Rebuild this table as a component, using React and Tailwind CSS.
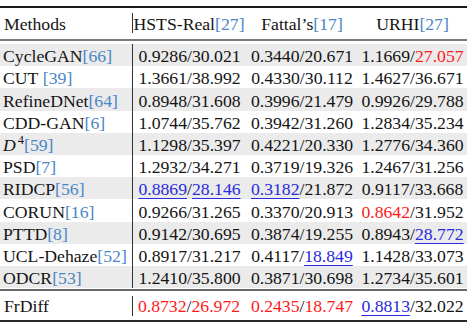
import React from 'react';

// each value: [left, right, styleLeft, styleRight]  ('r' = red, 'u' = blue underlined)
const rows = [
  { name: 'CycleGAN', ref: '66', vals: [['0.9286', '30.021'], ['0.3440', '20.671'], ['1.1669', '27.057', '', 'r']] },
  { name: 'CUT\u00a0', ref: '39', vals: [['1.3661', '38.992'], ['0.4330', '30.112'], ['1.4627', '36.671']] },
  { name: 'RefineDNet', ref: '64', vals: [['0.8948', '31.608'], ['0.3996', '21.479'], ['0.9926', '29.788']] },
  { name: 'CDD-GAN', ref: '6', vals: [['1.0744', '35.762'], ['0.3942', '31.260'], ['1.2834', '35.234']] },
  { name: 'D4', ref: '59', vals: [['1.1298', '35.397'], ['0.4221', '20.330'], ['1.2776', '34.360']] },
  { name: 'PSD', ref: '7', vals: [['1.2932', '34.271'], ['0.3719', '19.326'], ['1.2467', '31.256']] },
  { name: 'RIDCP', ref: '56', vals: [['0.8869', '28.146', 'u', 'u'], ['0.3182', '21.872', 'u'], ['0.9117', '33.668']] },
  { name: 'CORUN', ref: '16', vals: [['0.9266', '31.265'], ['0.3370', '20.913'], ['0.8642', '31.952', 'r']] },
  { name: 'PTTD', ref: '8', vals: [['0.9142', '30.695'], ['0.3874', '19.255'], ['0.8943', '28.772', '', 'u']] },
  { name: 'UCL-Dehaze', ref: '52', vals: [['0.8917', '31.217'], ['0.4117', '18.849', '', 'u'], ['1.1428', '33.073']] },
  { name: 'ODCR', ref: '53', vals: [['1.2410', '35.800'], ['0.3871', '30.698'], ['1.2734', '35.601']] },
];

const ours = [['0.8732', '26.972', 'r', 'r'], ['0.2435', '18.747', 'r', 'r'], ['0.8813', '32.022', 'u']];

const Part = ({ text, kind }) => {
  if (kind === 'r') return <span className="text-[#ff1a1a]">{text}</span>;
  if (kind === 'u') return <span className="text-[#2a2ae0] underline decoration-1 underline-offset-[3px]">{text}</span>;
  return <span>{text}</span>;
};

const Value = ({ v }) => (
  <span>
    <Part text={v[0]} kind={v[2]} />/<Part text={v[1]} kind={v[3]} />
  </span>
);

const Ref = ({ n }) => <span className="text-[#4a86c4]">[{n}]</span>;

const MethodName = ({ name }) => {
  if (name === 'D4') {
    return (
      <span>
        <i>D</i>
        <span className="text-[12.5px] relative -top-[7px] ml-[2px]">4</span>
      </span>
    );
  }
  return <span>{name}</span>;
};

export default function App() {
  return (
    <div
      className="w-[475px] h-[329px] bg-white text-[#141414] pt-[6px]"
      style={{ fontFamily: '"Liberation Serif", "Times New Roman", serif' }}
    >
      <div className="w-[467px] text-[17.7px] leading-none whitespace-nowrap">
        {/* top rule */}
        <div className="h-[2px] bg-[#1a1a1a]" />

        {/* header */}
        <div className="grid grid-cols-[132px_114px_112px_109px] h-[31px] items-center pt-[3px]">
          <div className="pl-[4px]">Methods</div>
          <div className="flex items-center">
            <div className="w-px h-[20px] bg-[#333] -mt-[3px]" />
            <div className="flex-1 text-center -ml-px">
              HSTS-Real<Ref n="27" />
            </div>
          </div>
          <div className="text-center">
            Fattal’s<Ref n="17" />
          </div>
          <div className="text-center">
            URHI<Ref n="27" />
          </div>
        </div>
        <div className="h-[2px] bg-[#7a7a7a]" />

        {/* body */}
        <div className="pt-[3px]">
          {rows.map((r, i) => (
            <div
              key={r.name}
              className={`grid grid-cols-[132px_114px_112px_109px] h-[22.2px] items-stretch ${i % 2 === 0 ? 'bg-[#ebebeb]' : 'bg-white'}`}
            >
              <div className="pl-[3px] pt-[4px] flex items-center">
                <span>
                  <MethodName name={r.name} />
                  <Ref n={r.ref} />
                </span>
              </div>
              <div className="border-l border-[#333] pt-[4px] flex items-center justify-center">
                <Value v={r.vals[0]} />
              </div>
              <div className="pt-[4px] flex items-center justify-center">
                <Value v={r.vals[1]} />
              </div>
              <div className="pt-[4px] flex items-center justify-center">
                <Value v={r.vals[2]} />
              </div>
            </div>
          ))}
        </div>

        <div className="h-[1px]" />
        <div className="h-[2px] bg-[#6a6a6a]" />

        {/* ours */}
        <div className="grid grid-cols-[132px_114px_112px_109px] h-[29px] items-center pt-[2px]">
          <div className="pl-[4px]">FrDiff</div>
          <div className="flex items-center">
            <div className="w-px h-[20px] bg-[#333] -mt-[2px]" />
            <div className="flex-1 text-center -ml-px">
              <Value v={ours[0]} />
            </div>
          </div>
          <div className="text-center">
            <Value v={ours[1]} />
          </div>
          <div className="text-center">
            <Value v={ours[2]} />
          </div>
        </div>
        <div className="h-[2px] bg-[#2a2a2a]" />
      </div>
    </div>
  );
}
